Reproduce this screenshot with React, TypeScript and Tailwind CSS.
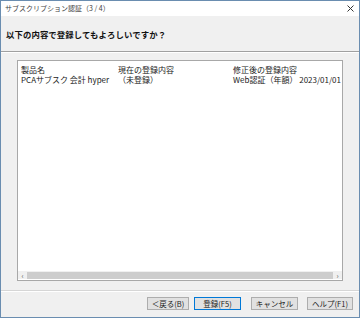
import React from "react";

const font = { fontFamily: '"Noto Sans CJK JP", "Noto Sans", sans-serif' };

function Btn({ children, focused }: { children: React.ReactNode; focused?: boolean }) {
  return (
    <div
      className={
        "h-[13px] flex items-center justify-center text-[7.5px] leading-none text-[#222] bg-[#e1e1e1] border " +
        (focused ? "border-[#0078d7] shadow-[inset_0_0_0_1px_#e1e1e1]" : "border-[#adadad]")
      }
    >
      {children}
    </div>
  );
}

export default function App() {
  return (
    <div style={font} className="w-[360px] h-[318px] border border-[#6a8db0] bg-[#f0f0f0] flex flex-col overflow-hidden">
      {/* Title bar */}
      <div className="h-[15px] bg-white flex items-center justify-between pl-[4px] pr-[5px] shrink-0">
        <span className="text-[7px] leading-none text-[#444]">サブスクリプション認証（3 / 4）</span>
        <svg width="7" height="7" viewBox="0 0 7 7">
          <path d="M0.5 0.5 L6.5 6.5 M6.5 0.5 L0.5 6.5" stroke="#333" strokeWidth="1" />
        </svg>
      </div>
      {/* Header */}
      <div className="h-[35px] shrink-0 flex items-center pl-[5px] pt-[2px]">
        <span className="text-[8.4px] font-bold leading-none text-[#111] tracking-[0.1px]">
          以下の内容で登録してもよろしいですか？
        </span>
      </div>
      <div className="h-[1px] bg-[#a0a0a0] shrink-0" />
      <div className="h-[1px] bg-white shrink-0" />
      {/* Body */}
      <div className="flex-1 flex flex-col px-[16px] pt-[7px]">
        <div className="h-[221px] border border-[#a8a8a8] bg-white flex flex-col">
          <div className="flex-1 pl-[3px] pt-[4px] text-[8px] leading-[10px] text-[#222]">
            <div className="flex">
              <span className="w-[97px]">製品名</span>
              <span className="w-[115px]">現在の登録内容</span>
              <span>修正後の登録内容</span>
            </div>
            <div className="flex">
              <span className="w-[97px] whitespace-nowrap">PCAサブスク 会計 hyper</span>
              <span className="w-[115px]">（未登録）</span>
              <span className="whitespace-nowrap">Web認証（年額） 2023/01/01</span>
            </div>
          </div>
          <div className="h-[8px] flex items-center bg-[#f0f0f0] mb-[1px]">
            <div className="w-[9px] flex items-center justify-center text-[7px] leading-none text-[#555]">‹</div>
            <div className="flex-1 h-[7px] bg-[#cdcdcd]" />
            <div className="w-[9px] flex items-center justify-center text-[7px] leading-none text-[#555]">›</div>
          </div>
        </div>
      </div>
      <div className="h-[1px] bg-[#d6d6d6] shrink-0" />
      <div className="h-[1px] bg-white shrink-0" />
      {/* Buttons */}
      <div className="h-[25px] shrink-0 flex items-start pt-[5px] pl-[146px] gap-[5px]">
        <div className="w-[42px]"><Btn>＜戻る(B)</Btn></div>
        <div className="w-[47px]"><Btn focused>登録(F5)</Btn></div>
        <div className="w-[47px] ml-[5px]"><Btn>キャンセル</Btn></div>
        <div className="w-[46px] ml-[4px]"><Btn>ヘルプ(F1)</Btn></div>
      </div>
    </div>
  );
}
